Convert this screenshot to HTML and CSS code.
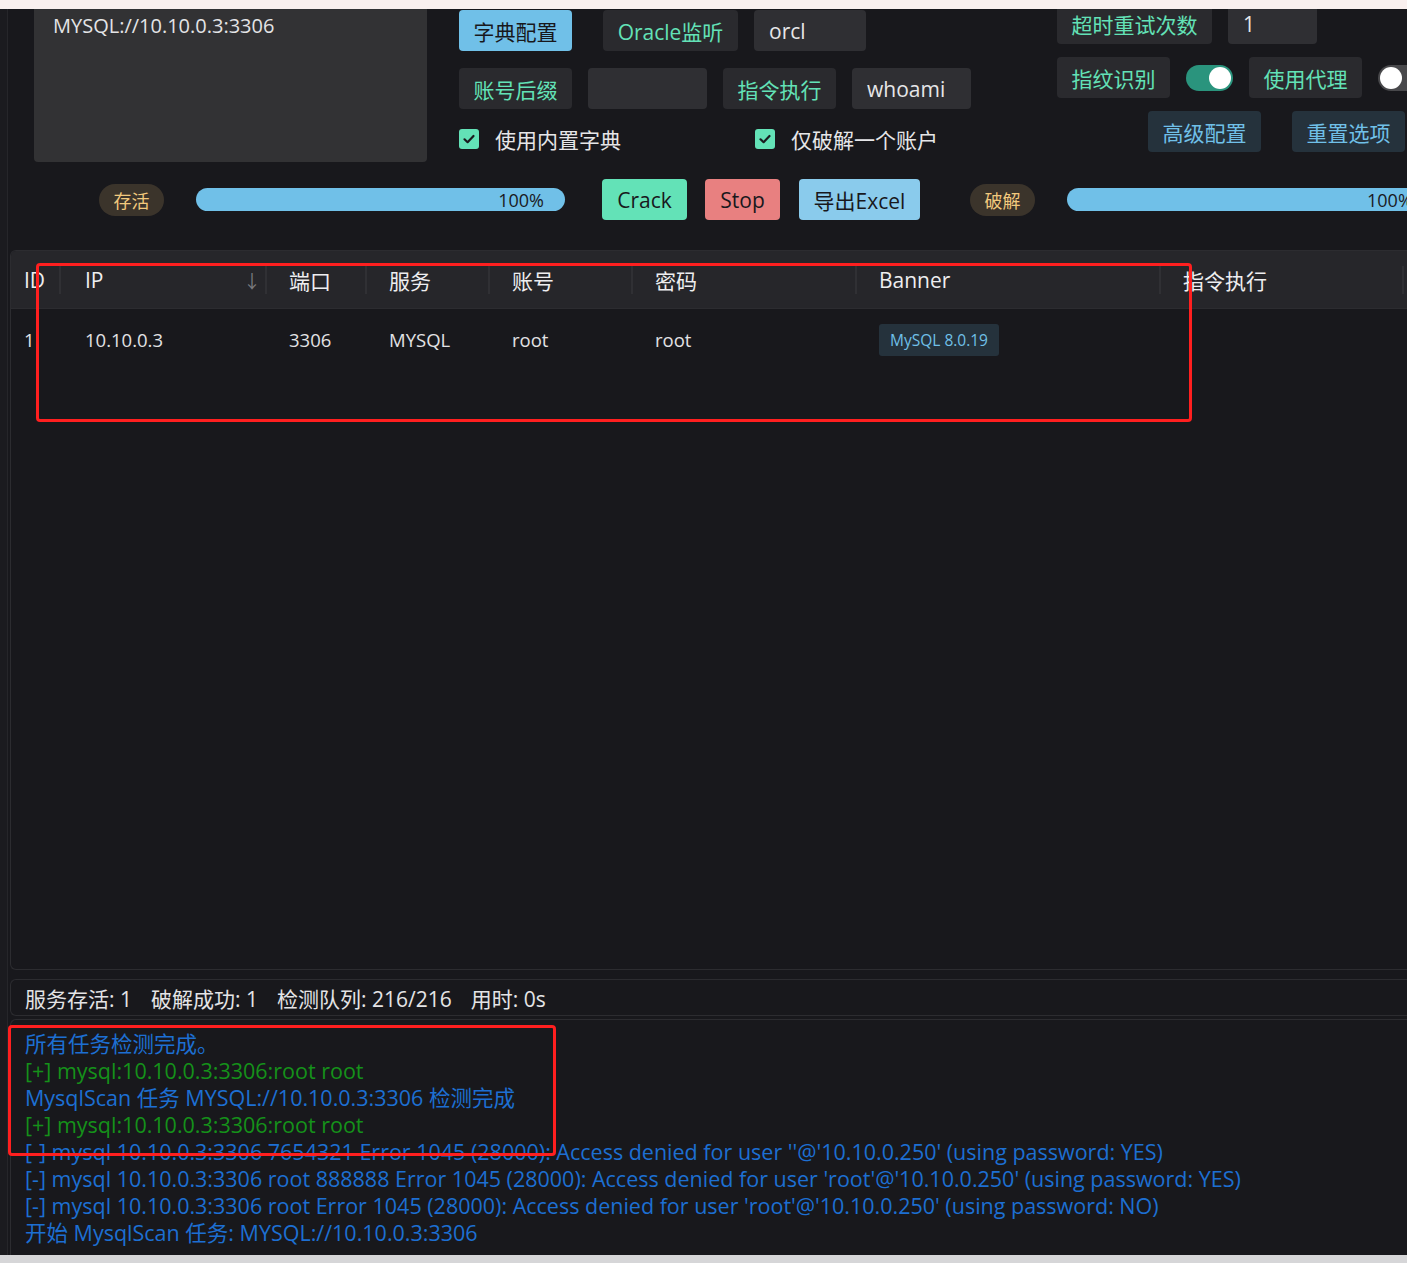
FILE: index.html
```html
<!DOCTYPE html>
<html lang="zh-CN">
<head>
<meta charset="utf-8">
<title>Crack</title>
<link rel="stylesheet" href="styles.css">
</head>
<body>
<div class="topstrip"></div>
<div class="app">
  <div class="rail"></div>
  <main class="main">
    <section class="controls">
      <div class="ctl-top">
        <div class="target">MYSQL://10.10.0.3:3306</div>
        <div class="form-left">
          <div class="frow">
            <span class="btn btn-info w113">字典配置</span>
            <span class="label w135 ml31">Oracle监听</span>
            <span class="input w112 ml16">orcl</span>
          </div>
          <div class="frow">
            <span class="label w113">账号后缀</span>
            <span class="input w119 ml16"></span>
            <span class="label w113 ml16">指令执行</span>
            <span class="input w119 ml16">whoami</span>
          </div>
          <div class="frow checks">
            <span class="check"><span class="box"><svg viewBox="0 0 20 20" width="20" height="20"><path d="M5.5 10.3 L8.6 13.2 L14.5 7" fill="none" stroke="#1b1b1f" stroke-width="2.2" stroke-linecap="round" stroke-linejoin="round"/></svg></span><span class="check-text">使用内置字典</span></span>
            <span class="check ml-check"><span class="box"><svg viewBox="0 0 20 20" width="20" height="20"><path d="M5.5 10.3 L8.6 13.2 L14.5 7" fill="none" stroke="#1b1b1f" stroke-width="2.2" stroke-linecap="round" stroke-linejoin="round"/></svg></span><span class="check-text">仅破解一个账户</span></span>
          </div>
        </div>
        <div class="form-right">
          <div class="rrow">
            <span class="label w155">超时重试次数</span>
            <span class="input w89 ml16">1</span>
          </div>
          <div class="rrow">
            <span class="label w113">指纹识别</span>
            <span class="switch on ml16"><span class="knob"></span></span>
            <span class="label w113 ml16">使用代理</span>
            <span class="switch off ml16"><span class="knob"></span></span>
          </div>
          <div class="rrow rrow3">
            <span class="btn btn-sec w113">高级配置</span>
            <span class="btn btn-sec w113 ml31">重置选项</span>
          </div>
        </div>
      </div>
      <div class="progress-row">
        <span class="tag tag-warn">存活</span>
        <div class="bar"><span class="bar-text">100%</span></div>
        <span class="btn btn-green w85 ml37">Crack</span>
        <span class="btn btn-red w75 ml18">Stop</span>
        <span class="btn btn-blue w121 ml19">导出Excel</span>
        <span class="tag tag-warn ml50">破解</span>
        <div class="bar bar2"><span class="bar-text">100%</span></div>
      </div>
    </section>

    <section class="table">
      <div class="thead">
        <div class="th c-id">ID</div>
        <div class="th c-ip">IP<span class="sort">↓</span></div>
        <div class="th">端口</div>
        <div class="th">服务</div>
        <div class="th">账号</div>
        <div class="th">密码</div>
        <div class="th">Banner</div>
        <div class="th">指令执行</div>
        <div class="th last"></div>
      </div>
      <div class="trow">
        <div class="td c-id">1</div>
        <div class="td c-ip">10.10.0.3</div>
        <div class="td">3306</div>
        <div class="td">MYSQL</div>
        <div class="td">root</div>
        <div class="td">root</div>
        <div class="td"><span class="btag">MySQL 8.0.19</span></div>
        <div class="td"></div>
        <div class="td"></div>
      </div>
    </section>

    <section class="status">
      <span>服务存活: 1</span>
      <span>破解成功: 1</span>
      <span>检测队列: 216/216</span>
      <span>用时: 0s</span>
    </section>

    <section class="log">
      <div class="ln blue">所有任务检测完成。</div>
      <div class="ln green">[+] mysql:10.10.0.3:3306:root root</div>
      <div class="ln blue">MysqlScan 任务 MYSQL://10.10.0.3:3306 检测完成</div>
      <div class="ln green">[+] mysql:10.10.0.3:3306:root root</div>
      <div class="ln blue">[-] mysql 10.10.0.3:3306 7654321 Error 1045 (28000): Access denied for user ''@'10.10.0.250' (using password: YES)</div>
      <div class="ln blue">[-] mysql 10.10.0.3:3306 root 888888 Error 1045 (28000): Access denied for user 'root'@'10.10.0.250' (using password: YES)</div>
      <div class="ln blue">[-] mysql 10.10.0.3:3306 root Error 1045 (28000): Access denied for user 'root'@'10.10.0.250' (using password: NO)</div>
      <div class="ln blue">开始 MysqlScan 任务: MYSQL://10.10.0.3:3306</div>
    </section>
  </main>
</div>
<div class="bottomstrip"></div>

<div class="mark mark-table"></div>
<div class="mark mark-log"></div>
</body>
</html>
```

FILE: styles.css
```css
* { box-sizing: border-box; }
html, body { margin: 0; padding: 0; }
body {
  width: 1407px;
  height: 1263px;
  overflow: hidden;
  background: #18181c;
  color: #e6e6e8;
  font-family: "Open Sans", "Noto Sans CJK SC", sans-serif;
  font-size: 20px;
  position: relative;
}

.topstrip {
  height: 9px;
  background: #f9f0ef;
  position: relative;
  z-index: 3;
}
.bottomstrip {
  position: absolute;
  left: 0; right: 0; bottom: 0;
  height: 8px;
  background: #d6d6d8;
  z-index: 3;
}

.app {
  display: flex;
  height: 1254px;
}
.rail {
  width: 8px;
  flex: none;
  background: #1b1b1f;
  border-right: 1px solid #26262a;
}
.main {
  flex: 1;
  min-width: 0;
  display: flex;
  flex-direction: column;
}

/* ---------- controls ---------- */
.controls { display: flex; flex-direction: column; }
.ctl-top { display: flex; align-items: flex-start; white-space: nowrap; }

.target {
  margin-left: 26px;
  margin-top: -6px;
  width: 393px;
  height: 159px;
  flex: none;
  background: #323234;
  border-radius: 4px;
  padding: 9px 19px;
  line-height: 28px;
  color: #e4e4e6;
  font-size: 20px;
}

.form-left {
  margin-left: 32px;
  margin-top: 1px;
  display: flex;
  flex-direction: column;
  gap: 17px;
  flex: none;
}
.frow { display: flex; align-items: center; height: 41px; }
.frow.checks { height: 22px; margin-top: 2px; }

.form-right {
  margin-left: 86px;
  margin-top: -6px;
  display: flex;
  flex-direction: column;
  gap: 13px;
  flex: none;
}
.rrow { display: flex; align-items: center; height: 41px; }
.rrow3 { padding-left: 91px; }

.label, .input, .btn {
  height: 41px;
  display: inline-flex;
  align-items: center;
  border-radius: 4px;
  flex: none;
  font-size: 21px;
}
.label {
  background: #2a2a2e;
  color: #63e2b7;
  justify-content: center;
}
.input {
  background: #2f2f33;
  color: #e6e6e8;
  padding-left: 15px;
}
.btn { justify-content: center; }
.btn-info { background: #70c0e8; color: #18181c; }
.btn-sec { background: #25323c; color: #70c0e8; }
.btn-green { background: #63e2b7; color: #18181c; }
.btn-red { background: #e88080; color: #18181c; }
.btn-blue { background: #8acbec; color: #18181c; }

.w75 { width: 75px; } .w85 { width: 85px; } .w89 { width: 89px; }
.w112 { width: 112px; } .w113 { width: 113px; } .w119 { width: 119px; }
.w121 { width: 121px; } .w135 { width: 135px; } .w155 { width: 155px; }
.ml16 { margin-left: 16px; } .ml18 { margin-left: 18px; } .ml19 { margin-left: 19px; }
.ml31 { margin-left: 31px; } .ml37 { margin-left: 37px; } .ml50 { margin-left: 50px; }

.check { display: inline-flex; align-items: center; }
.ml-check { margin-left: 134px; }
.box {
  width: 20px; height: 20px;
  background: #63e2b7;
  border-radius: 3px;
  display: inline-flex;
  flex: none;
}
.check-text { margin-left: 16px; color: #e6e6e8; font-size: 21px; }

.switch {
  width: 47px; height: 26px;
  border-radius: 13px;
  display: inline-flex;
  align-items: center;
  padding: 0 2px;
  flex: none;
}
.switch.on { background: #2a947d; justify-content: flex-end; }
.switch.off { background: #48484b; justify-content: flex-start; }
.knob {
  width: 22px; height: 22px;
  border-radius: 50%;
  background: #ffffff;
}

.progress-row {
  display: flex;
  align-items: center;
  height: 41px;
  margin-top: 17px;
  padding-left: 91px;
  white-space: nowrap;
}
.tag {
  height: 32px;
  width: 65px;
  border-radius: 16px;
  display: inline-flex;
  align-items: center;
  justify-content: center;
  font-size: 18px;
  flex: none;
}
.tag-warn { background: #3b342b; color: #f2c97d; }
.bar {
  margin-left: 32px;
  width: 369px;
  height: 23px;
  border-radius: 12px;
  background: #70c0e8;
  flex: none;
  display: flex;
  align-items: center;
  justify-content: flex-end;
  padding-right: 21px;
}
.bar2 { width: 340px; padding-right: 0; justify-content: flex-start; padding-left: 300px; border-radius: 12px 0 0 12px; }
.bar-text { color: #1a1a1e; font-size: 18px; }

/* ---------- table ---------- */
.table {
  margin-top: 30px;
  margin-left: 2px;
  height: 720px;
  border: 1px solid #2c2c30;
  border-right: none;
  border-radius: 6px 0 0 6px;
  overflow: hidden;
  flex: none;
}
.thead, .trow {
  display: grid;
  grid-template-columns: 50px 206px 100px 123px 143px 224px 304px 243px 1fr;
}
.thead {
  height: 58px;
  background: #26262a;
  border-bottom: 1px solid #2c2c30;
}
.th {
  position: relative;
  display: flex;
  align-items: center;
  padding-left: 22px;
  color: #eeeef0;
  font-size: 21px;
}
.th::after {
  content: "";
  position: absolute;
  right: 0;
  top: 15px;
  width: 2px;
  height: 28px;
  background: #303034;
}
.th.last::after { display: none; }
.th.c-id, .td.c-id { padding-left: 13px; }
.th.c-ip, .td.c-ip { padding-left: 24px; }
.sort { margin-left: auto; margin-right: 6px; color: #7a7a7e; font-size: 18px; }
.trow { height: 60px; }
.td {
  display: flex;
  align-items: center;
  padding-left: 22px;
  color: #e2e2e4;
  font-size: 18.5px;
}
.btag {
  background: #25323c;
  color: #70c0e8;
  font-size: 15.5px;
  height: 32px;
  padding: 0 11px;
  border-radius: 3px;
  display: inline-flex;
  align-items: center;
  margin-top: 2px;
}

/* ---------- status ---------- */
.status {
  margin-top: 9px;
  margin-left: 2px;
  height: 37px;
  border: 1px solid #2c2c30;
  border-right: none;
  border-radius: 6px 0 0 6px;
  display: flex;
  align-items: center;
  gap: 19px;
  padding-left: 14px;
  color: #e4e4e6;
  font-size: 21px;
  flex: none;
}

/* ---------- log ---------- */
.log {
  margin-top: 3px;
  margin-left: 2px;
  flex: 1;
  border: 1px solid #2c2c30;
  border-right: none;
  border-bottom: none;
  border-radius: 6px 0 0 0;
  padding: 10px 0 0 14px;
  font-size: 21.5px;
  line-height: 27px;
  white-space: nowrap;
}
.ln.blue { color: #1d6fd2; }
.ln.green { color: #15911a; }

/* ---------- annotation marks ---------- */
.mark {
  position: absolute;
  border: 3px solid #ff1f1f;
  border-radius: 4px;
  z-index: 4;
}
.mark-table { left: 36px; top: 263px; width: 1156px; height: 159px; }
.mark-log { left: 8px; top: 1025px; width: 548px; height: 131px; }
```
